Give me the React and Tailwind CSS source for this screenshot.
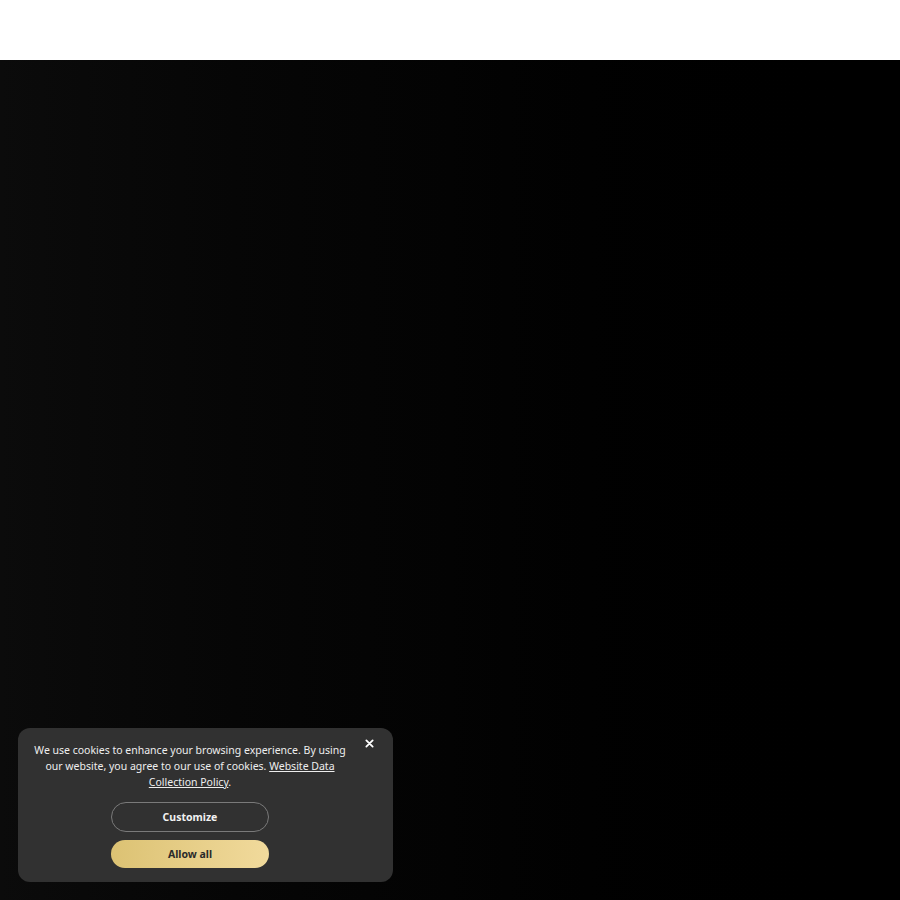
import React, { useState } from 'react';

export default function App() {
  const [open, setOpen] = useState(true);

  return (
    <div className="relative min-h-[900px] bg-white" style={{ fontFamily: '"Noto Sans", "Open Sans", sans-serif' }}>
      <header className="h-[60px] bg-white" />
      <main className="h-[840px] bg-gradient-to-r from-[#0b0b0b] via-[#030303] to-black" />

      {open && (
        <div className="absolute left-[18px] bottom-[18px] w-[375px] rounded-[12px] bg-[#313131] pl-[12px] pr-[43px] pt-[14px] pb-[14px]">
          <button
            onClick={() => setOpen(false)}
            className="absolute right-[19px] top-[11px] text-white"
            aria-label="Close"
          >
            <svg width="9" height="9" viewBox="0 0 10 10" fill="none" stroke="currentColor" strokeWidth="2" strokeLinecap="round">
              <path d="M1.5 1.5l7 7M8.5 1.5l-7 7" />
            </svg>
          </button>
          <p className="text-center text-[10.5px] leading-[16px] text-[#eeeeee]">
            We use cookies to enhance your browsing experience. By using our website, you agree to our use of cookies.{' '}
            <a href="#" className="underline">Website Data Collection Policy</a>.
          </p>
          <div className="mt-[12px] flex flex-col items-center gap-[8px]">
            <button className="h-[30px] w-[158px] rounded-full border border-[#7a7a7a] pt-px text-[10.5px] font-bold text-[#f2f2f2]">
              Customize
            </button>
            <button className="h-[28px] w-[158px] rounded-full bg-gradient-to-r from-[#dcc273] to-[#f1da9c] pt-px text-[10.5px] font-bold text-[#2a2a2a]">
              Allow all
            </button>
          </div>
        </div>
      )}
    </div>
  );
}
